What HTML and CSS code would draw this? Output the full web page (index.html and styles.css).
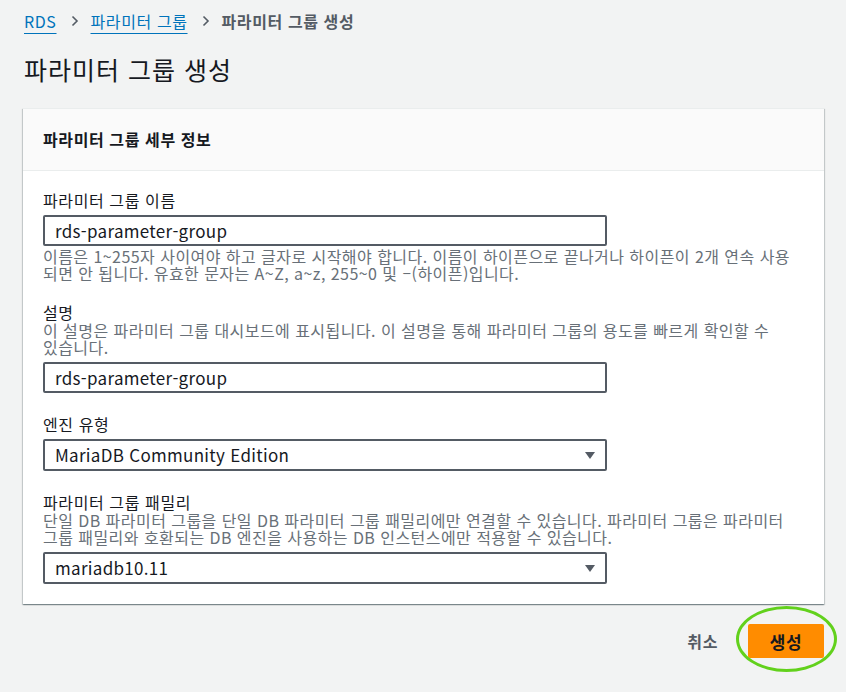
FILE: index.html
```html
<!DOCTYPE html>
<html lang="ko">
<head>
<meta charset="utf-8">
<title>파라미터 그룹 생성</title>
<link rel="stylesheet" href="styles.css">
</head>
<body>
<div class="page">
  <nav class="crumbs">
    <a class="crumb-link" href="#">RDS</a>
    <svg class="chev" width="8" height="12" viewBox="0 0 8 12"><path d="M1.5 1.5 L6 6 L1.5 10.5" fill="none" stroke="#545b64" stroke-width="1.6"/></svg>
    <a class="crumb-link" href="#">파라미터 그룹</a>
    <svg class="chev" width="8" height="12" viewBox="0 0 8 12"><path d="M1.5 1.5 L6 6 L1.5 10.5" fill="none" stroke="#545b64" stroke-width="1.6"/></svg>
    <span class="crumb-current">파라미터 그룹 생성</span>
  </nav>
  <h1 class="title">파라미터 그룹 생성</h1>

  <section class="panel">
    <div class="panel-head">파라미터 그룹 세부 정보</div>
    <div class="panel-body">
      <div class="field">
        <div class="label">파라미터 그룹 이름</div>
        <div class="input">rds-parameter-group</div>
        <div class="help after">이름은 1~255자 사이여야 하고 글자로 시작해야 합니다. 이름이 하이픈으로 끝나거나 하이픈이 2개 연속 사용되면 안 됩니다. 유효한 문자는 A~Z, a~z, 255~0 및 –(하이픈)입니다.</div>
      </div>
      <div class="field">
        <div class="label">설명</div>
        <div class="help words">이 설명은 파라미터 그룹 대시보드에 표시됩니다. 이 설명을 통해 파라미터 그룹의 용도를 빠르게 확인할 수 있습니다.</div>
        <div class="input with-desc">rds-parameter-group</div>
      </div>
      <div class="field">
        <div class="label">엔진 유형</div>
        <div class="input select">MariaDB Community Edition<span class="caret"></span></div>
      </div>
      <div class="field">
        <div class="label">파라미터 그룹 패밀리</div>
        <div class="help words">단일 DB 파라미터 그룹을 단일 DB 파라미터 그룹 패밀리에만 연결할 수 있습니다. 파라미터 그룹은 파라미터 그룹 패밀리와 호환되는 DB 엔진을 사용하는 DB 인스턴스에만 적용할 수 있습니다.</div>
        <div class="input select with-desc">mariadb10.11<span class="caret"></span></div>
      </div>
    </div>
  </section>

  <div class="actions">
    <button class="btn-link" type="button">취소</button>
    <div class="primary-wrap">
      <button class="btn-primary" type="button">생성</button>
      <span class="highlight"></span>
    </div>
  </div>
</div>
</body>
</html>
```

FILE: styles.css
```css
* { box-sizing: border-box; }
html, body { margin: 0; padding: 0; }
body {
  background: #f2f3f3;
  font-family: "Noto Sans CJK KR", "Noto Sans", sans-serif;
  color: #16191f;
  width: 846px;
  height: 692px;
  overflow: hidden;
  letter-spacing: 0.6px;
}
.page { padding: 10px 22px 0 23px; }

.crumbs {
  display: flex;
  align-items: center;
  height: 22px;
  font-size: 16px;
  line-height: 22px;
  padding-left: 1px;
}
.crumb-link {
  color: #0073bb;
  text-decoration: underline;
  text-underline-offset: 5px;
  text-decoration-thickness: 1px;
}
.chev { margin: 0 12px 0 14px; }
.crumb-current { color: #545b64; font-weight: 700; }

.title {
  margin: 22px 0 0 1px;
  font-size: 25px;
  line-height: 30px;
  font-weight: 400;
  letter-spacing: 1px;
  color: #16191f;
}

.panel {
  margin-top: 24px;
  background: #fff;
  box-shadow: 0 1px 1px 0 rgba(0, 28, 36, 0.3), 1px 1px 1px 0 rgba(0, 28, 36, 0.15), -1px 1px 1px 0 rgba(0, 28, 36, 0.15);
  border-top: 1px solid #eaeded;
}
.panel-head {
  background: #fafafa;
  border-bottom: 1px solid #eaeded;
  padding: 19px 20px 20px 20px;
  font-size: 16px;
  line-height: 22px;
  font-weight: 700;
}
.panel-body {
  padding: 19px 20px 20px 20px;
  display: flex;
  flex-direction: column;
  gap: 21px;
}
.field { display: flex; flex-direction: column; }
.label {
  font-size: 16px;
  line-height: 20px;
}
.help {
  font-size: 16px;
  line-height: 16.5px;
  letter-spacing: 0.45px;
  color: #687078;
}
.help.words { word-break: keep-all; }
.help.after { margin-top: 2px; }
.label + .input { margin-top: 5px; }
.input {
  position: relative;
  width: 564px;
  height: 31px;
  border: 2px solid #545b64;
  border-radius: 2px;
  padding: 0 10px;
  font-size: 17px;
  line-height: 27px;
  letter-spacing: 0.3px;
  color: #16191f;
  background: #fff;
}
.input.select { height: 32px; }
.input.with-desc { margin-top: 7px; }
.caret {
  position: absolute;
  right: 10px;
  top: 11px;
  width: 0;
  height: 0;
  border-left: 5px solid transparent;
  border-right: 5px solid transparent;
  border-top: 7px solid #545b64;
}

.actions {
  display: flex;
  justify-content: flex-end;
  align-items: center;
  margin-top: 20px;
  gap: 30px;
}
.btn-link {
  background: none;
  border: 0;
  padding: 0;
  font-family: inherit;
  font-size: 16px;
  font-weight: 700;
  letter-spacing: 0.6px;
  color: #545b64;
}
.primary-wrap { position: relative; }
.btn-primary {
  display: block;
  width: 76px;
  height: 34px;
  background: #ff8c00;
  border: 0;
  border-radius: 2px;
  font-family: inherit;
  font-size: 17px;
  font-weight: 700;
  letter-spacing: 0.6px;
  color: #16191f;
}
.highlight {
  position: absolute;
  left: -12px;
  top: -18px;
  width: 101px;
  height: 66px;
  border: 3.5px solid #62d11c;
  border-radius: 50%;
  pointer-events: none;
}
```
